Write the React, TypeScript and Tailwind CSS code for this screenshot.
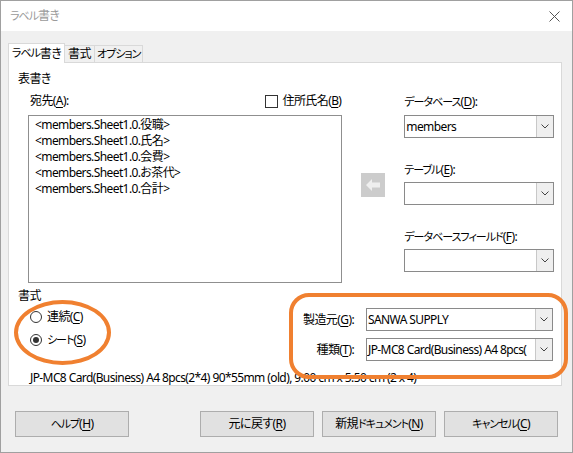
import * as React from "react";

const U = ({ c }: { c: string }) => <span className="underline underline-offset-2">{c}</span>;

// kana in the reference font are much narrower than in Noto Sans CJK
const K = ({ children }: { children: React.ReactNode }) => (
  <span className="text-[11px] tracking-[-1px]">{children}</span>
);

const Chevron = () => (
  <svg width="8" height="5" viewBox="0 0 8 5" className="text-[#444]">
    <path d="M0.5 0.5 L4 4 L7.5 0.5" fill="none" stroke="currentColor" strokeWidth="1" />
  </svg>
);

const Combo = ({ value, className = "" }: { value?: string; className?: string }) => (
  <div className={`flex h-[23px] border border-[#8a8a8a] bg-white ${className}`}>
    <div className="flex-1 overflow-hidden whitespace-nowrap pl-[1px] leading-[21px]">{value}</div>
    <div className="flex w-[17px] items-center justify-center border-l border-[#c8c8c8] bg-[#efefef]">
      <Chevron />
    </div>
  </div>
);

const Radio = ({ checked, children }: { checked?: boolean; children: React.ReactNode }) => (
  <div className="flex h-[20px] items-center">
    <span className="flex h-[12px] w-[12px] items-center justify-center rounded-full border border-[#333] bg-white">
      {checked && <span className="h-[6px] w-[6px] rounded-full bg-[#333]" />}
    </span>
    <span className="ml-[5px]">{children}</span>
  </div>
);

const Button = ({ children, className = "" }: { children: React.ReactNode; className?: string }) => (
  <button
    type="button"
    className={`h-[26px] w-[114px] border border-[#adadad] bg-[#e1e1e1] text-[12px] text-black ${className}`}
  >
    {children}
  </button>
);

const items = [
  "<members.Sheet1.0.役職>",
  "<members.Sheet1.0.氏名>",
  "<members.Sheet1.0.会費>",
  "<members.Sheet1.0.お茶代>",
  "<members.Sheet1.0.合計>",
];

export default function App() {
  return (
    <div className="relative flex h-[453px] w-[573px] flex-col overflow-hidden border border-[#a0a0a0] bg-[#f0f0f0] font-['Noto_Sans','Noto_Sans_CJK_JP',sans-serif] text-[12px] tracking-[-0.6px] text-black [font-feature-settings:'palt']">
      {/* title bar */}
      <div className="flex h-[30px] shrink-0 items-center justify-between bg-white pl-[9px] pr-[12px]">
        <span className="text-[#9a9a9a]">
          <K>ラベル</K>書き
        </span>
        <svg width="11" height="11" viewBox="0 0 11 11" className="text-[#555]">
          <path d="M0.5 0.5 L10.5 10.5 M10.5 0.5 L0.5 10.5" stroke="currentColor" strokeWidth="1" />
        </svg>
      </div>

      <div className="flex flex-1 flex-col pl-[7px] pr-[10px] pt-[12px]">
        {/* tabs */}
        <div className="flex h-[19px] items-end whitespace-nowrap">
          <div className="relative z-10 -mb-px flex h-[20px] min-w-[57px] items-center justify-center border border-b-0 border-[#d9d9d9] bg-white px-[2px]">
            <K>ラベル</K>書き
          </div>
          <div className="-ml-px flex h-[17px] min-w-[31px] items-center justify-center border border-b-0 border-[#d9d9d9] bg-[#f0f0f0] px-[2px]">
            書式
          </div>
          <div className="-ml-px flex h-[17px] min-w-[41px] items-center justify-center border border-b-0 border-[#d9d9d9] bg-[#f0f0f0] px-[2px]">
            <K>オプション</K>
          </div>
        </div>

        {/* panel */}
        <div className="flex h-[324px] flex-col border border-[#d9d9d9] bg-white pl-[9px] pt-[8px] pr-[7px]">
          <div className="h-[16px] leading-[16px]">表書き</div>

          <div className="mt-[6px] flex">
            <div className="ml-[10px] flex w-[315px] flex-col">
              <div className="flex h-[16px] items-center justify-between leading-[16px]">
                <span className="pl-[2px]">
                  宛先(<U c="A" />):
                </span>
                <span className="flex items-center pr-[1px]">
                  <span className="h-[13px] w-[13px] border border-[#333] bg-white" />
                  <span className="ml-[5px]">
                    住所氏名(<U c="B" />)
                  </span>
                </span>
              </div>
              <div className="mt-[6px] h-[168px] border border-[#8f8f8f] bg-white pl-[6px] pt-px">
                {items.map((t) => (
                  <div key={t} className="h-[16px] leading-[16px]">
                    {t}
                  </div>
                ))}
              </div>
            </div>

            <div className="ml-[19px] mt-[80px] flex h-[24px] w-[24px] items-center justify-center self-start bg-[#cccccc]">
              <svg width="16" height="14" viewBox="0 0 16 14">
                <path d="M1 7 L7 1 L7 4.5 L15 4.5 L15 9.5 L7 9.5 L7 13 Z" fill="#efefef" />
              </svg>
            </div>

            <div className="ml-[19px] flex w-[150px] flex-col">
              <div className="mt-px h-[16px] whitespace-nowrap leading-[16px]">
                <K>データベース</K>(<U c="D" />):
              </div>
              <Combo value="members" className="mt-[5px]" />
              <div className="mt-[24px] h-[16px] whitespace-nowrap leading-[16px]">
                <K>テーブル</K>(<U c="E" />):
              </div>
              <Combo className="mt-[4px]" />
              <div className="mt-[24px] h-[16px] whitespace-nowrap leading-[16px]">
                <K>データベースフィールド</K>(<U c="F" />):
              </div>
              <Combo className="mt-[4px]" />
            </div>
          </div>

          <div className="mt-[5px] h-[16px] leading-[16px]">書式</div>

          <div className="flex">
            <div className="ml-[12px] mt-[3px] flex flex-col gap-[3px]">
              <Radio>
                連続(<U c="C" />)
              </Radio>
              <Radio checked>
                <K>シート</K>(<U c="S" />)
              </Radio>
            </div>
            <div className="ml-auto mr-[1px] mt-[4px] grid grid-cols-[auto_187px] items-center gap-x-[12px] gap-y-[7px]">
              <span className="justify-self-end">
                製造元(<U c="G" />):
              </span>
              <Combo value="SANWA SUPPLY" />
              <span className="justify-self-end">
                種類(<U c="T" />):
              </span>
              <Combo value="JP-MC8 Card(Business) A4 8pcs(" />
            </div>
          </div>

          <div className="ml-[12px] mt-[9px] h-[16px] whitespace-nowrap leading-[16px]">
            JP-MC8 Card(Business) A4 8pcs(2*4) 90*55mm (old), 9.00 cm x 5.50 cm (2 x 4)
          </div>
        </div>

        {/* buttons */}
        <div className="mt-[25px] flex pl-[7px] pr-[4px]">
          <Button>
            <K>ヘルプ</K>(<U c="H" />)
          </Button>
          <div className="ml-auto flex gap-[8px]">
            <Button>
              元に戻す(<U c="R" />)
            </Button>
            <Button>
              新規<K>ドキュメント</K>(<U c="N" />)
            </Button>
            <Button>
              <K>キャンセル</K>(<U c="C" />)
            </Button>
          </div>
        </div>
      </div>

      {/* orange annotations */}
      <div className="pointer-events-none absolute left-[13px] top-[299px] h-[65px] w-[97px] rounded-[50%] border-[4px] border-[#f08030]" />
      <div className="pointer-events-none absolute left-[288px] top-[292px] h-[86px] w-[279px] rounded-[20px] border-[4px] border-[#f08030]" />
    </div>
  );
}
